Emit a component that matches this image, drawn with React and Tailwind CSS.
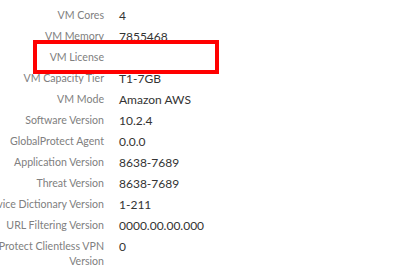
import React from "react";

// Device info rows: label on the left, value on the right
const rows = [
  ["VM Cores", "4"],
  ["VM Memory", "7855468"],
  ["VM License", ""],
  ["VM Capacity Tier", "T1-7GB"],
  ["VM Mode", "Amazon AWS"],
  ["Software Version", "10.2.4"],
  ["GlobalProtect Agent", "0.0.0"],
  ["Application Version", "8638-7689"],
  ["Threat Version", "8638-7689"],
  ["Device Dictionary Version", "1-211"],
  ["URL Filtering Version", "0000.00.00.000"],
  ["GlobalProtect Clientless VPN Version", "0"],
];

export default function App() {
  return (
    <div className="relative w-[400px] h-[265px] overflow-hidden bg-white font-['Lato','Liberation_Sans',sans-serif]">
      <div className="ml-[-45px] pt-[5px]">
        {rows.map(([label, value]) => (
          <div key={label} className="flex leading-[15px] py-[3px]">
            <div className="w-[149px] shrink-0 text-right text-[10.6px] text-[#808080]">{label}</div>
            <div className="pl-[15px] text-[12px] text-[#333333]">{value}</div>
          </div>
        ))}
      </div>

      {/* highlight around the empty license row */}
      <div className="absolute left-[33px] top-[40px] w-[186px] h-[34px] border-4 border-[#ff0000]" />
    </div>
  );
}
